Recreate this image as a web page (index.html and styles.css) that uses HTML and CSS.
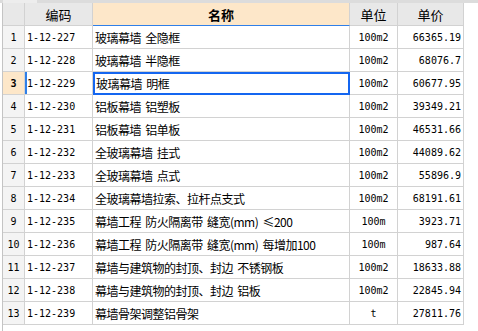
FILE: index.html
```html
<!DOCTYPE html>
<html>
<head>
<meta charset="utf-8">
<link rel="stylesheet" href="styles.css">
</head>
<body>
<div class="topbar"><span class="tb-a"></span><span class="tb-b"></span><span class="tb-c"></span></div>
<div class="frame">
  <div class="grid">
    <div class="row head">
      <div class="c num"></div>
      <div class="c code hc">编码</div>
      <div class="c name hc hname">名称</div>
      <div class="c unit hc">单位</div>
      <div class="c price hc">单价</div>
    </div>
    <div class="row"><div class="c num">1</div><div class="c code">1-12-227</div><div class="c name">玻璃幕墙 全隐框</div><div class="c unit">100m2</div><div class="c price">66365.19</div></div>
    <div class="row"><div class="c num">2</div><div class="c code">1-12-228</div><div class="c name">玻璃幕墙 半隐框</div><div class="c unit">100m2</div><div class="c price">68076.7</div></div>
    <div class="row sel"><div class="c num">3</div><div class="c code">1-12-229</div><div class="c name">玻璃幕墙 明框</div><div class="c unit">100m2</div><div class="c price">60677.95</div></div>
    <div class="row"><div class="c num">4</div><div class="c code">1-12-230</div><div class="c name">铝板幕墙 铝塑板</div><div class="c unit">100m2</div><div class="c price">39349.21</div></div>
    <div class="row"><div class="c num">5</div><div class="c code">1-12-231</div><div class="c name">铝板幕墙 铝单板</div><div class="c unit">100m2</div><div class="c price">46531.66</div></div>
    <div class="row"><div class="c num">6</div><div class="c code">1-12-232</div><div class="c name">全玻璃幕墙 挂式</div><div class="c unit">100m2</div><div class="c price">44089.62</div></div>
    <div class="row"><div class="c num">7</div><div class="c code">1-12-233</div><div class="c name">全玻璃幕墙 点式</div><div class="c unit">100m2</div><div class="c price">55896.9</div></div>
    <div class="row"><div class="c num">8</div><div class="c code">1-12-234</div><div class="c name">全玻璃幕墙拉索、拉杆点支式</div><div class="c unit">100m2</div><div class="c price">68191.61</div></div>
    <div class="row"><div class="c num">9</div><div class="c code">1-12-235</div><div class="c name">幕墙工程 防火隔离带 缝宽(mm) ≤200</div><div class="c unit">100m</div><div class="c price">3923.71</div></div>
    <div class="row"><div class="c num">10</div><div class="c code">1-12-236</div><div class="c name">幕墙工程 防火隔离带 缝宽(mm) 每增加100</div><div class="c unit">100m</div><div class="c price">987.64</div></div>
    <div class="row"><div class="c num">11</div><div class="c code">1-12-237</div><div class="c name">幕墙与建筑物的封顶、封边 不锈钢板</div><div class="c unit">100m2</div><div class="c price">18633.88</div></div>
    <div class="row"><div class="c num">12</div><div class="c code">1-12-238</div><div class="c name">幕墙与建筑物的封顶、封边 铝板</div><div class="c unit">100m2</div><div class="c price">22845.94</div></div>
    <div class="row"><div class="c num">13</div><div class="c code">1-12-239</div><div class="c name">幕墙骨架调整铝骨架</div><div class="c unit">t</div><div class="c price">27811.76</div></div>
  </div>
</div>
</body>
</html>
```
FILE: styles.css
```css
html, body {
  margin: 0;
  padding: 0;
  background: #ffffff;
  width: 478px;
  height: 331px;
  overflow: hidden;
}
.topbar {
  display: flex;
  height: 3px;
  background: #dcdcdc;
}
.tb-a { width: 3px; }
.tb-b { width: 34px; background: #ededed; }
.tb-c { width: 2px; }
.frame {
  margin-left: 2px;
  border-left: 1px solid #c4c4c4;
  height: 328px;
}
.grid {
  width: 461px;
}
.row {
  display: grid;
  grid-template-columns: 22px 68px 257px 48px 66px;
  height: 23px;
}
.c {
  box-sizing: border-box;
  border-right: 1px solid #d2d2d2;
  border-bottom: 1px solid #d2d2d2;
  height: 23px;
  display: flex;
  align-items: center;
  white-space: pre;
  overflow: hidden;
  color: #000;
}
.num {
  background: #f4f4f4;
  justify-content: center;
  font-family: "DejaVu Sans Mono", monospace;
  font-size: 10px;
  padding-top: 1px;
}
.code {
  font-family: "DejaVu Sans Mono", monospace;
  font-size: 10px;
  padding-left: 2px;
}
.name {
  font-family: "Noto Sans CJK SC", sans-serif;
  font-size: 12px;
  padding-left: 2px;
  letter-spacing: -0.5px;
  word-spacing: 2px;
}
.unit {
  justify-content: center;
  font-family: "DejaVu Sans Mono", monospace;
  font-size: 10px;
}
.price {
  justify-content: flex-end;
  font-family: "DejaVu Sans Mono", monospace;
  font-size: 10px;
  padding-right: 2px;
}
.head .c {
  background: #e8e8e8;
  justify-content: center;
  font-family: "Noto Sans CJK SC", sans-serif;
  font-size: 13px;
  padding: 0;
  letter-spacing: 0;
}
.head .hname {
  background: #fde7c9;
  font-weight: bold;
  border-bottom: 1px solid #2f7fe8;
}
.sel .num {
  background: #fde7c9;
  font-weight: bold;
}
.sel .code {
  box-shadow: inset 2px 0 0 #2f7fe8;
}
.sel .name {
  border: 2px solid #1466f0;
  padding-left: 1px;
}
```
